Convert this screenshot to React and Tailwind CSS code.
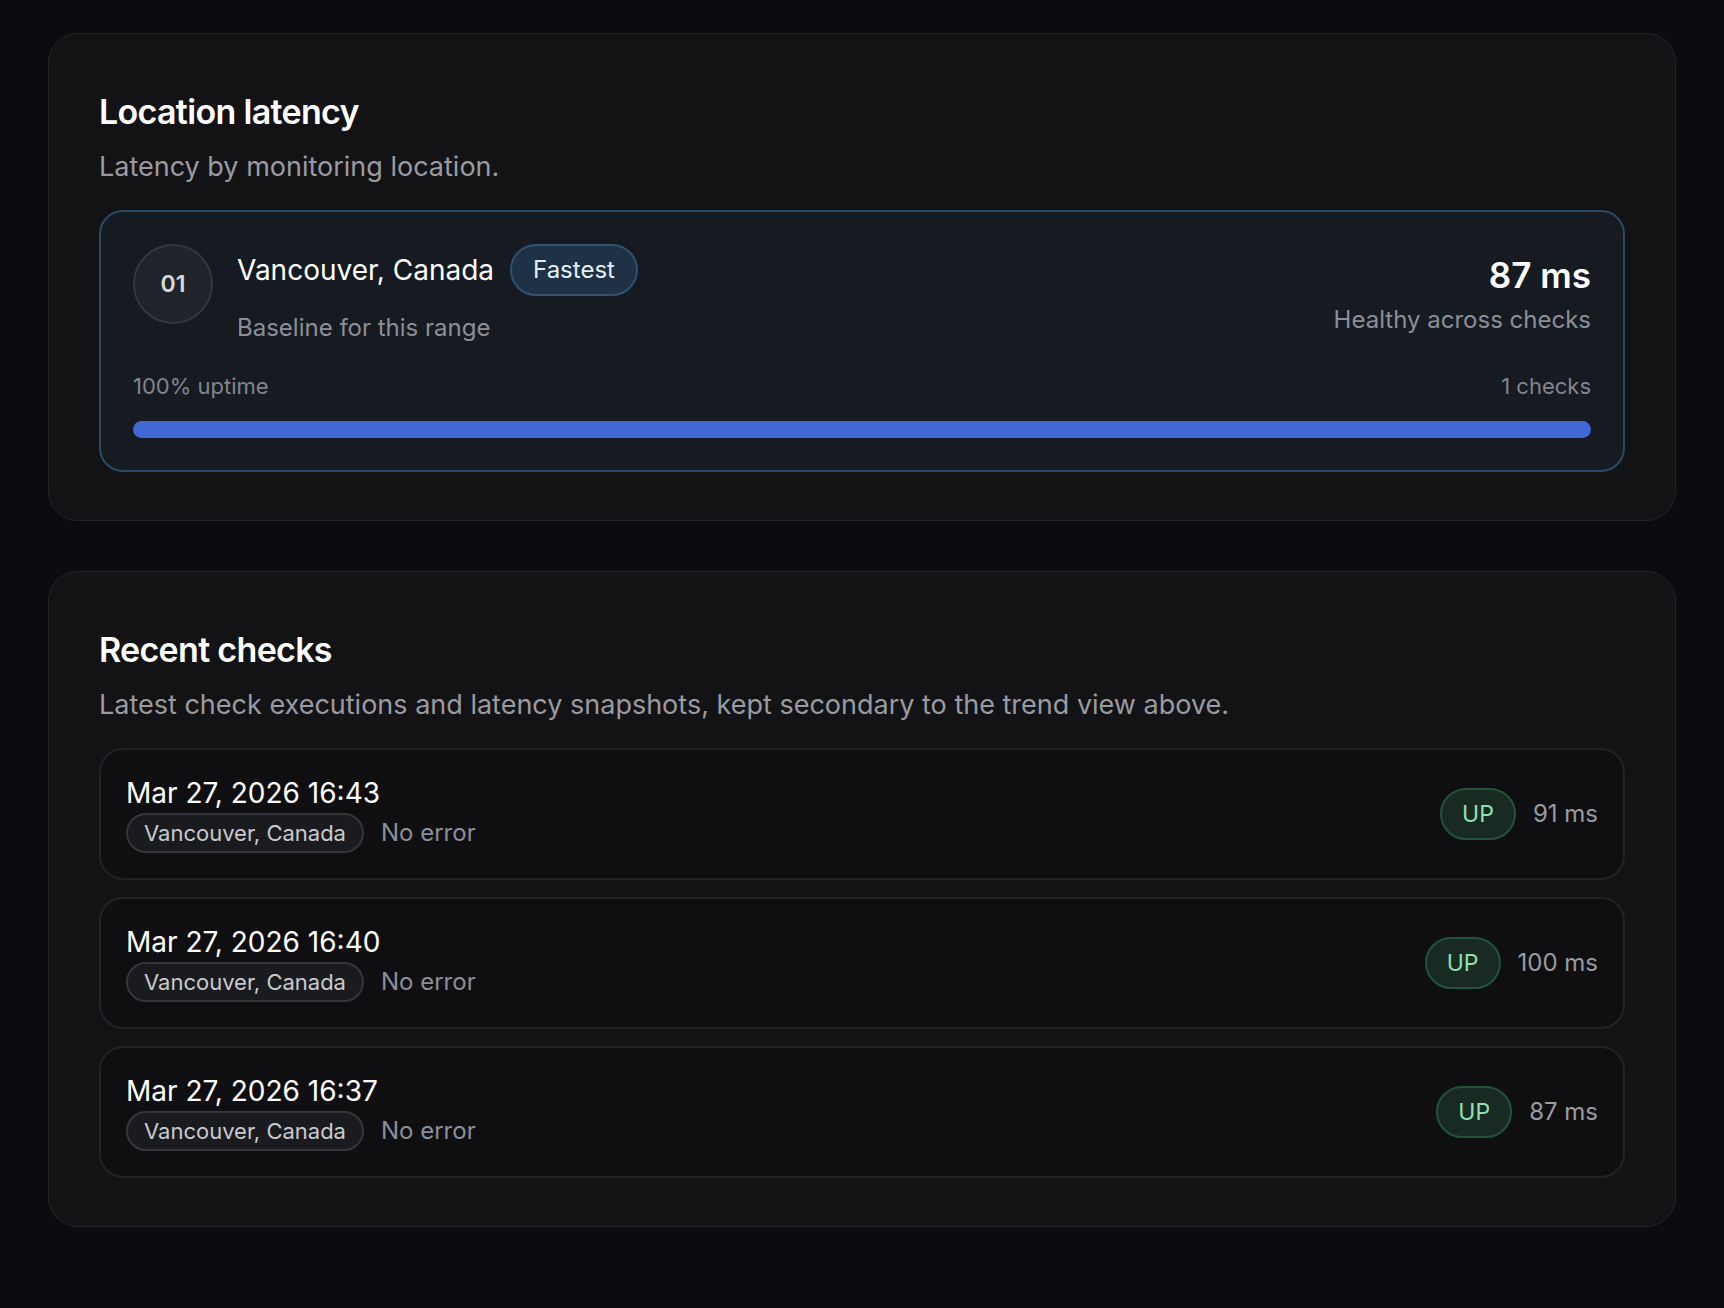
export default function App() {
  const rows = [
    ["Mar 27, 2026 16:43", "91 ms"],
    ["Mar 27, 2026 16:40", "100 ms"],
    ["Mar 27, 2026 16:37", "87 ms"],
  ];
  return (
    <div className="min-h-[1308px] w-[1724px] bg-[#0b0c0f] px-[48px] pt-[33px] pb-[80px] flex flex-col gap-[50px]" style={{ fontFamily: "Inter, 'Noto Sans', sans-serif" }}>
      <div className="rounded-[30px] border border-[#25262b] bg-[#131316] px-[50px] pt-[56px] pb-[48px]">
        <h2 className="text-[34px] font-semibold text-white tracking-[-0.02em] leading-[44px]">Location latency</h2>
        <p className="mt-[16px] text-[27px] text-[#9a9ba1] leading-[34px]">Latency by monitoring location.</p>
        <div className="mt-[26px] rounded-[24px] border-2 border-[#2a4a68] bg-[#161b22] px-[32px] pt-[32px] pb-[32px]">
          <div className="flex justify-between">
            <div className="flex gap-[24px]">
              <div className="w-[80px] h-[80px] rounded-full border-2 border-[#34373d] bg-[#1f232a] flex items-center justify-center text-[23px] font-semibold text-[#d8d9dc]">01</div>
              <div>
                <div className="flex items-center gap-[16px]">
                  <span className="text-[28px] text-white">Vancouver, Canada</span>
                  <span className="rounded-full border-2 border-[#2f5272] bg-[#1f3145] px-[21px] h-[52px] flex items-center text-[24px] text-[#e6eef7]">Fastest</span>
                </div>
                <div className="mt-[14px] text-[24px] text-[#8c8f96]">Baseline for this range</div>
              </div>
            </div>
            <div className="text-right">
              <div className="text-[35px] font-semibold text-white leading-[50px] mt-[6px]">87 ms</div>
              <div className="text-[24px] text-[#8c8f96] mt-[2px]">Healthy across checks</div>
            </div>
          </div>
          <div className="mt-[24px] flex justify-between text-[22px] text-[#82858c]">
            <span>100% uptime</span><span>1 checks</span>
          </div>
          <div className="mt-[18px] h-[17px] rounded-full bg-[#4169d6]" />
        </div>
      </div>
      <div className="rounded-[30px] border border-[#25262b] bg-[#131316] px-[50px] pt-[56px] pb-[48px]">
        <h2 className="text-[34px] font-semibold text-white tracking-[-0.02em] leading-[44px]">Recent checks</h2>
        <p className="mt-[16px] text-[27px] text-[#9a9ba1] leading-[34px]">Latest check executions and latency snapshots, kept secondary to the trend view above.</p>
        <div className="mt-[26px] flex flex-col gap-[17px]">
          {rows.map(([d, ms]) => (
            <div key={d} className="h-[132px] rounded-[24px] border-2 border-[#222328] bg-[#0f0f12] px-[25px] flex items-center justify-between">
              <div>
                <div className="text-[28px] text-white leading-[36px]">{d}</div>
                <div className="mt-[2px] flex items-center gap-[17px]">
                  <span className="rounded-full border-2 border-[#34363b] bg-[#1a1b1f] px-[16px] h-[40px] flex items-center text-[22px] text-[#c9cacd]">Vancouver, Canada</span>
                  <span className="text-[24px] text-[#8c8f96]">No error</span>
                </div>
              </div>
              <div className="flex items-center gap-[17px]">
                <span className="rounded-full border-2 border-[#22523a] bg-[#182a22] px-[20px] h-[52px] flex items-center text-[23px] text-[#8fe0b3]">UP</span>
                <span className="text-[24px] text-[#9a9ba1]">{ms}</span>
              </div>
            </div>
          ))}
        </div>
      </div>
    </div>
  );
}
